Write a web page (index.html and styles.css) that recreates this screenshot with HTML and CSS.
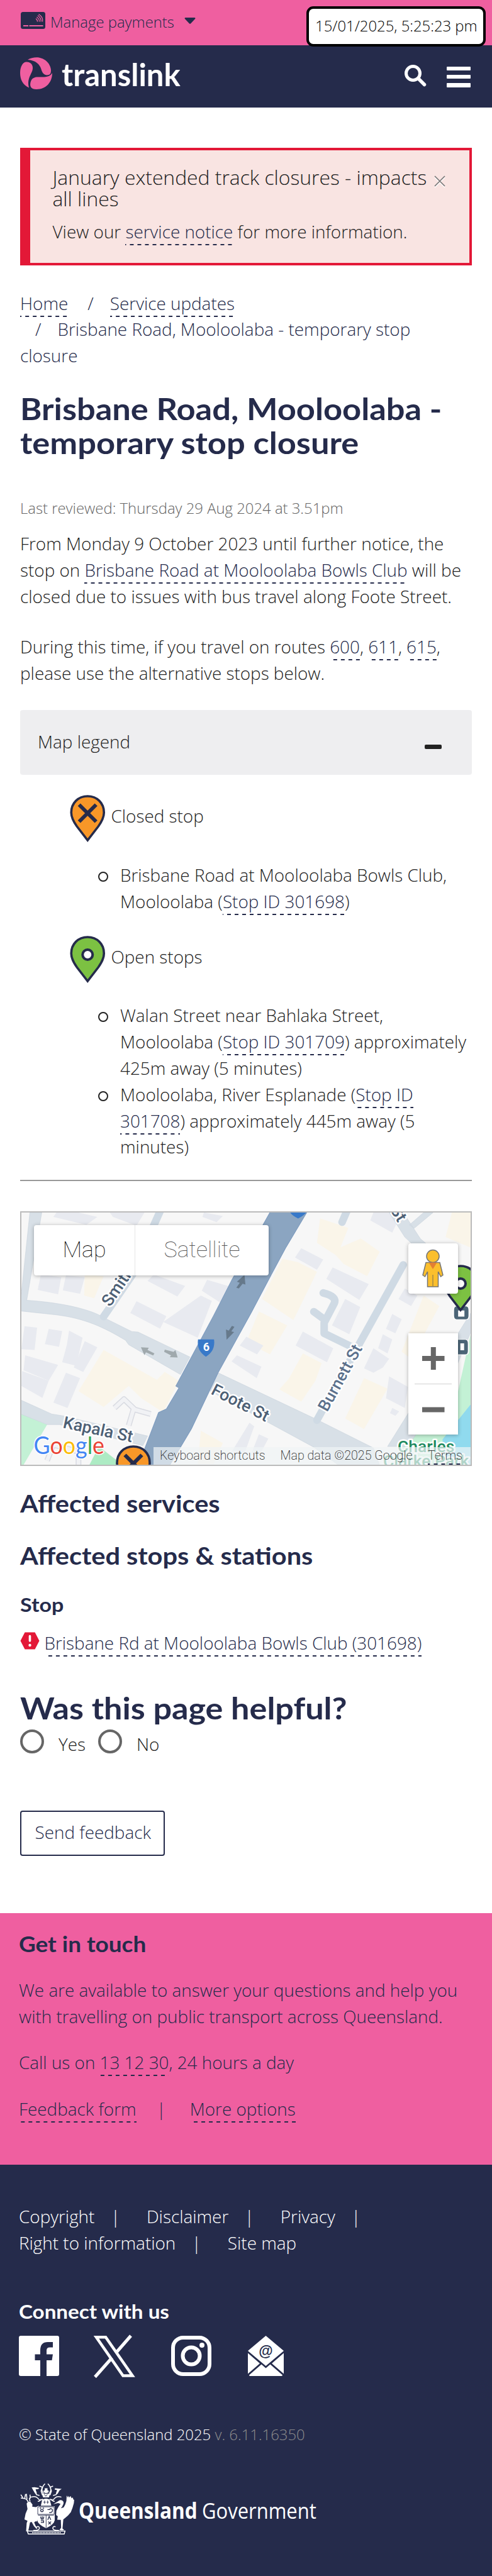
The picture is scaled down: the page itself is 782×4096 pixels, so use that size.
FILE: index.html
```
<!DOCTYPE html>
<html lang="en">
<head>
<meta charset="utf-8">
<title>Brisbane Road, Mooloolaba - temporary stop closure | Translink</title>
<link rel="stylesheet" href="styles.css">
</head>
<body>
<div class="topbar">
  <svg class="card-icon" viewBox="0 0 39 27"><rect width="39" height="27" rx="3.5" fill="#252b4b"/><path d="M4 22h8M13.500 22h22" stroke="#ef5fa0" stroke-width="2"/><g fill="none" stroke="#ef5fa0" stroke-width="1.300"><path d="M24 10.500q3 2.500 2.500 5M25.500 8q4.500 3.500 4 7.500M27 5.500q6 4.500 5 10M28.500 3.500q7.500 5 6 12"/></g></svg>
  <span class="manage">Manage payments</span>
  <svg class="caret" viewBox="0 0 18 10"><path d="M1.500 0h15q1.500.5.8 1.800L10 9.500q-1 .9-2 0L.7 1.800Q0 .5 1.500 0z" fill="#252b4b"/></svg>
</div>
<div class="clock"><span>15/01/2025, 5:25:23 pm</span></div>
<header class="masthead">
  <svg class="brand-mark" viewBox="0 0 102 102"><g fill="#ef5fa0"><path d="M24 8C45-4 72-2 88 17c14 17 12 38 3 39-12 3-20-3-24-18C62 22 50 10 24 8z"/><path d="M0 50C0 28 10 13 22 15c17 1 22 17 15 32-6 14-15 26-9 50C8 88 0 70 0 50z"/><path d="M102 50c0 30-20 52-50 52-17 0-22-9-19-22 4-16 15-18 30-17 19 1 32-1 39-13z"/></g></svg>
  <span class="brand">translink</span>
  <svg class="search" viewBox="0 0 34 34"><circle cx="13.500" cy="13.500" r="11" fill="none" stroke="#fff" stroke-width="5"/><path d="M22 22l9.500 9.500" stroke="#fff" stroke-width="5.500" stroke-linecap="round"/></svg>
  <div class="burger"><i></i><i></i><i></i></div>
</header>
<main class="content">
  <section class="alert">
    <div class="alert-title">January extended track closures - impacts<br>all lines</div>
    <div class="alert-text">View our <a>service notice</a> for more information.</div>
    <svg class="close" viewBox="0 0 18 18"><path d="M1 3l16 16M17 3L1 19" stroke="#fff" stroke-width="1.500"/><path d="M1 1l16 16M17 1L1 17" stroke="#777" stroke-width="1.700"/></svg>
  </section>
  <nav class="crumbs"><a>Home</a><span class="sep first">/</span><a>Service updates</a><br><span class="sep second">/</span>Brisbane Road, Mooloolaba - temporary stop<br>closure</nav>
  <h1><span class="wide w-title">Brisbane Road, Mooloolaba -</span><br><span class="wide w-title">temporary stop closure</span></h1>
  <div class="reviewed">Last reviewed: Thursday 29 Aug 2024 at 3.51pm</div>
  <p class="para">From Monday 9 October 2023 until further notice, the<br>stop on <a>Brisbane Road at Mooloolaba Bowls Club</a> will be<br>closed due to issues with bus travel along Foote Street.</p>
  <p class="para second-para">During this time, if you travel on routes <a>600</a>, <a>611</a>, <a>615</a>,<br>please use the alternative stops below.</p>
  <div class="panel"><span>Map legend</span><i class="minus"></i></div>
  <div class="legend-row">
    <svg class="pin" viewBox="0 0 56 74"><path d="M28 2C13 2 2 13 2 28c0 8 4 15 9 22l17 22 17-22c5-7 9-14 9-22C54 13 43 2 28 2z" fill="#f89728" stroke="#252b4b" stroke-width="3.600"/><path d="M14.500 15.500l27 27M41.500 15.500l-27 27" stroke="#252b4b" stroke-width="6"/></svg>
    <span>Closed stop</span>
  </div>
  <ul class="stops">
    <li>Brisbane Road at Mooloolaba Bowls Club,<br>Mooloolaba (<a>Stop ID 301698</a>)</li>
  </ul>
  <div class="legend-row open">
    <svg class="pin" viewBox="0 0 56 74"><path d="M28 2C13 2 2 13 2 28c0 8 4 15 9 22l17 22 17-22c5-7 9-14 9-22C54 13 43 2 28 2z" fill="#7cc142" stroke="#252b4b" stroke-width="3.600"/><circle cx="28" cy="30" r="8" fill="#fff" stroke="#252b4b" stroke-width="4"/></svg>
    <span>Open stops</span>
  </div>
  <ul class="stops open-list">
    <li>Walan Street near Bahlaka Street,<br>Mooloolaba (<a>Stop ID 301709</a>) approximately<br>425m away (5 minutes)</li>
    <li>Mooloolaba, River Esplanade (<a>Stop ID<br>301708</a>) approximately 445m away (5<br>minutes)</li>
  </ul>
  <div class="rule"></div>
  <div class="map">
    <svg class="tiles" viewBox="0 0 714 401">
      <rect width="714" height="401" fill="#f7f7f7"/>
      <g transform="scale(.4987 .2791) translate(-68 -67)">
        <g fill="#faf5e9">
          <path d="M1020 100l90 55-25 110 65-50 60 75-40 140-75-70-25-50-60-70z"/>
          <path d="M900 330l50 20 60 55-75 275-100-120z"/><path d="M825 630l90 80-55 165-75-70z"/>
          <path d="M270 420l60 10-30 125-32-15z"/><path d="M330 850l110 110 60 60 25-45 45 50-50 180-70-80-40-70-80 120-80-90z"/>
          <path d="M965 870l60 55-20 100-45 120-70-70 30-60z"/><path d="M1160 1010l75 60-75 230-60-60z"/>
          <path d="M640 1310l70 70-30 120h-50z"/><path d="M1440 67h60v200l-80-60z"/><path d="M1350 540l50 60-90 300-30-40z"/>
        </g>
        <g fill="#e8eaf0">
          <path d="M180 67h70l60 25-35 45-105-45z"/><path d="M350 67h110l-25 75-75-50z"/><path d="M650 67l60 20-20 35-45-30z"/>
          <path d="M130 420l65 15-10 98-65-25z"/><path d="M210 425l60 10-15 95-55-20z"/><path d="M490 420l100 65-25 60-95-88z"/>
          <path d="M660 450l75 40-27 97-65-75z"/><path d="M435 572l95 85-20 72-95-90z"/><path d="M640 540l35 30-45 210-110-90z"/>
          <path d="M78 715l40 8-8 127-42-5z"/><path d="M155 730l43 12-10 90-45-15z"/><path d="M220 740l43 40-20 160-45-20 15-100z"/><path d="M270 800l40 35-45 140-30-25z"/>
          <path d="M80 880l105 55-30 90-80-60z"/><path d="M70 970l85 55-20 98-67-68z"/><path d="M210 980l45 30-40 170-45-30z"/>
          <path d="M960 270l70 65-20 58-70-70z"/><path d="M1060 380l115 95-30 90-105-120z"/><path d="M1100 560l48 45-35 155-55-50z"/><path d="M965 745l97 95-20 80-100-95z"/>
          <path d="M785 775l54 50-20 50-55-50z"/><path d="M755 880l78 65-15 65-80-95z"/><path d="M1190 67h90l-30 115-70-70z"/><path d="M1190 840l50 60-20 50-30 30-30-25z"/>
          <path d="M1250 645l30 30-20 80-30-25z"/><path d="M1220 760l30 30-15 80-30-30z"/><path d="M1250 1180l22 20-12 25-17-15z"/><path d="M795 1265l15 20-30 150-40-10z"/><path d="M825 1330l30 25-30 100-25-10z"/><path d="M1240 1000l60 60-10 120-60-55z"/><path d="M1290 500l40 40-20 60-40-40z"/>
        </g>
        <path d="M68 1215l82 60-75 229h-7z" fill="#c3f1d5"/><path d="M315 1400l75 104H285z" fill="#adebc4"/>
        <path d="M1500 760v744h-260l70-170 140-170z" fill="#c3f1d5"/><path d="M1500 1160l-90 200 10 144h80z" fill="#90daee"/>
        <g fill="#d8e0e7" stroke="#c6d0da" stroke-width="1.500">
          <path d="M95 67h38L85 567C200 580 290 620 330 665l90 80 20 3 165 142-30 100-165-170-10-25C330 720 270 670 180 650L66 628V560z"/>
          <path d="M695 980l305 258 190 170 20 100h-130l-80-104-330-320z"/>
          <path d="M66 1135l99 80 35 10 270 115-15 55-265-120h-40l-84-60z"/>
          <path d="M1285 67l55 150 60 90v50l-50-50-60-100-50-140zM1380 67l-60 90-15-20 45-70z"/>
          <path d="M1500 640v110l-70 300-130 350h-65z"/>
        </g>
        <g fill="none" stroke="#cfdae4" stroke-linecap="round" stroke-linejoin="round">
          <g stroke-width="12">
            <path vector-effect="non-scaling-stroke" d="M515 40l-30 120M430 400l-100 260"/>
            <path vector-effect="non-scaling-stroke" d="M1285 365L1010 1250"/>
            <path vector-effect="non-scaling-stroke" d="M1030 525q45 20 35 60l-32 110v60l85 75M1000 632l35 45M1105 60l-15 62"/>
          </g>
        </g>
        <path d="M365 1180l30-50 35 60 50 25M425 1190l-15 90M150 1480l20-90 80 40v74" fill="none" stroke="#d9dbe2" stroke-width="9" vector-effect="non-scaling-stroke" stroke-linejoin="round"/>
        <path d="M365 1180l30-50 35 60 50 25M425 1190l-15 90M150 1480l20-90 80 40v74" fill="none" stroke="#f1f2f5" stroke-width="6" vector-effect="non-scaling-stroke" stroke-linejoin="round"/>
        <path d="M862 60h118l-70 210-45 150-65 220-105 340-85 320-70 210H440l65-304 25-20 40-120-10-10 120-400 60-210 95-300z" fill="#8ba5c1" stroke="#6a8db8" stroke-width="2"/>
        <g fill="#66798b"><path d="M779 422l3 55-9-4-12 27-8-5 11-28-9-6z"/><path d="M722 792l24-44-9-4 10-26-8-5-10 27-9-7z"/></g>
        <g fill="#a0a9ad"><path d="M449 835l25 2-4 13 22 20-4 11-23-18-5 16z"/><path d="M566 893l-7-42-6 10-28-13-2 13 22 20-4 10z"/></g>
        <path d="M631 790h51q5 65-26 98-30-33-25-98z" fill="#3879c9"/><path d="M925 67h51q-10 20-26 34-18-15-25-34z" fill="#3879c9"/>
        <path d="M1455 600h30q10 0 10 25v30q0 22-10 22h-30q-10 0-10-22v-30q0-25 10-25zM1440 790h43q10 0 10 25v40q0 22-10 22h-43z" fill="#4b6577" stroke="#fff" stroke-width="4"/>
        <path d="M1460 625h20v35h-20zM1467 812h12v40h-12z" fill="#fff"/>
      </g>
      <text x="294" y="220" class="shield" text-anchor="middle">6</text>
      <g class="roads">
        <text transform="translate(141 151) rotate(-56)">Smith</text>
        <text transform="translate(300 288) rotate(27)">Foote St</text>
        <text transform="translate(486 318) rotate(-61)" class="soft">Burnett St</text>
        <text transform="translate(65 342) rotate(12)">Kapala St</text>
        <text transform="translate(577 -18) rotate(58)">r St</text>
        <text x="598" y="381" class="park">Charles</text>
        <text x="575" y="404" class="park">Clarke Park</text>
      </g>
      <g transform="translate(150 370)"><path d="M28 2C13 2 2 13 2 28c0 8 4 15 9 22l17 22 17-22c5-7 9-14 9-22C54 13 43 2 28 2z" fill="#f89728" stroke="#252b4b" stroke-width="3.600"/><path d="M14.500 15.500l27 27M41.500 15.500l-27 27" stroke="#252b4b" stroke-width="6"/></g>
      <g transform="translate(670 83)"><path d="M28 2C13 2 2 13 2 28c0 8 4 15 9 22l17 22 17-22c5-7 9-14 9-22C54 13 43 2 28 2z" fill="#7cc142" stroke="#252b4b" stroke-width="3.600"/><circle cx="28" cy="30" r="8" fill="#fff" stroke="#252b4b" stroke-width="4"/></g>
      <text transform="translate(19.500 384) scale(.94 1)" class="google"><tspan fill="#4285f4">G</tspan><tspan fill="#ea4335">o</tspan><tspan fill="#fbbc05">o</tspan><tspan fill="#4285f4">g</tspan><tspan fill="#34a853">l</tspan><tspan fill="#ea4335">e</tspan></text>
    </svg>
    <div class="map-type"><span class="active">Map</span><span>Satellite</span></div>
    <div class="pegman"><svg viewBox="0 0 34 60"><g fill="#fbbf2d" stroke="#757575" stroke-width="1.500"><path d="M6 20.500h22l5 20-3.500 2.500-4-8V59h-17V35l-4 8L1 40.500z"/><circle cx="17" cy="10.500" r="10"/></g><path d="M17 40v19" stroke="#a58a45" stroke-width="1.500"/><path d="M10.500 20.500h13L17 31z" fill="#e37f32"/></svg></div>
    <div class="zoomer"><svg viewBox="0 0 79 161"><path d="M22 40h35.500M39.800 22v36M22 121.500h35.500" stroke="#666" stroke-width="8"/><path d="M10 80.500h59" stroke="#e6e6e6" stroke-width="2"/></svg></div>
    <div class="attribution"><span class="keys">Keyboard shortcuts</span><span class="data">Map data ©2025 Google</span><a class="terms">Terms</a></div>
  </div>
  <h2 class="services"><span class="wide w-services">Affected services</span></h2>
  <h2 class="stations"><span class="wide w-services">Affected stops &amp; stations</span></h2>
  <h3><span class="wide w-stop">Stop</span></h3>
  <div class="affected"><svg viewBox="0 0 31 28"><path d="M7.500.5h16L30.500 14l-7 13.500h-16L.5 14z" fill="#e31837"/><path d="M15.500 6.500v7.500" stroke="#fff" stroke-width="3.600" stroke-linecap="round"/><circle cx="15.500" cy="21" r="2.200" fill="#fff"/></svg><a>Brisbane Rd at Mooloolaba Bowls Club (301698)</a></div>
  <h2 class="helpful"><span class="wide w-helpful">Was this page helpful?</span></h2>
  <div class="radios"><i></i><span class="yes">Yes</span><i></i><span>No</span></div>
  <div class="send"><span>Send feedback</span></div>
</main>
<section class="touch">
  <h2><span class="wide w-foot">Get in touch</span></h2>
  <p>We are available to answer your questions and help you<br>with travelling on public transport across Queensland.</p>
  <p class="call">Call us on <a>13 12 30</a>, 24 hours a day</p>
  <p class="links"><a>Feedback form</a><span class="bar">|</span><a>More options</a></p>
</section>
<footer class="footer">
  <div class="foot-links">Copyright<span class="bar">|</span>Disclaimer<span class="bar">|</span>Privacy<span class="bar">|</span><br>Right to information<span class="bar">|</span>Site map</div>
  <h2><span class="wide w-foot">Connect with us</span></h2>
  <div class="social">
    <svg class="fb" viewBox="0 0 64 64"><path fill="#fff" fill-rule="evenodd" d="M3 0h58q3 0 3 3v58q0 3-3 3H44V39h8.500l1.500-9.500H44v-6q0-5 5-5h5V10h-8q-12 0-12 13v6.500h-8.500V39H34v25H3q-3 0-3-3V3q0-3 3-3z"/></svg>
    <svg class="xx" viewBox="0 0 66 66"><path fill="none" stroke="#fff" stroke-width="4.500" d="M4 2.300h15L61.500 63.500H46.500z"/><path stroke="#fff" stroke-width="5" d="M59 0L35 27.500M29 35L2 65.500"/></svg>
    <svg class="ig" viewBox="0 0 64 64"><rect x="3" y="3" width="58" height="58" rx="16" fill="none" stroke="#fff" stroke-width="6"/><circle cx="32" cy="32" r="13.500" fill="none" stroke="#fff" stroke-width="6"/><circle cx="49" cy="15" r="4" fill="#fff"/></svg>
    <svg class="mail" viewBox="0 0 57 64"><path fill="#fff" d="M28.500 0L57 24 28.500 48 0 24zM0 27.500l19 16.500L0 60.500zM57 27.500L38 44l19 16.500zM21.500 45.500l7 6 7-6L55 62.500q-.5 1.500-1.500 1.500h-50Q2 64 2 62.500z"/><text x="28.500" y="32" text-anchor="middle" class="at">@</text></svg>
  </div>
  <div class="legal">© State of Queensland 2025 <span>v. 6.11.16350</span></div>
  <div class="gov">
    <svg class="crest" viewBox="28 28 392 367">
      <g fill="#fff">
        <path d="M74 172l10-14 18 2 14 20-2 14 26 4 22-10v30l-8 20 2 40-10 24-8-2-10 8 10 24 14 18-8 4-18-20-16-30-12 4-8 40-4 18 8 6H70l4-60 6-16-22-10 8-40 14-34-4-24z"/>
        <path d="M300 156q14-14 30-6 14 8 8 26-8 20-18 30l20-6q12-16 20-46l2-40 10 16 2-14 8 12 8-10 8 16 8-6 4 14 6 4-2 22-10 36-12 30-20 24-24 20-10 8-6 66 12 10-16 4-18-4 12-16-2-56-26-2 4-24-12-10 2-30 16-30 14-20-18-6-34 8z"/>
        <path d="M150 192h126v100q-4 30-62 58-60-28-64-58z"/>
        <path d="M186 144q28-14 54 0l12 44h-76z"/>
        <path d="M204 62h20v34h-20zM196 78h36v14h-36z"/>
        <path d="M184 100h58l-8 28h-42z"/>
        <path d="M110 56l20-2 34 6-6 8-20 2 10 30-12 2-16-28zM326 66l-48-4-2 10 18 2-8 26 10 4 14-26z"/>
      </g>
      <g fill="none" stroke="#fff" stroke-width="7">
        <path d="M206 30q-18 14-22 46l10 24M226 30q18 14 22 46l-10 24M166 46l20 8-8 28 10 30M264 46l-20 8 8 28-10 30"/>
        <path d="M132 70l12 38 22 6M298 70l-12 38-22 6M106 126q30-10 44 4l20 20 20-10M324 126q-30-10-44 4l-20 20-20-10M154 156q16 2 22-16M276 156q-16 2-22-16"/>
        <path d="M84 160q-8-20-26-24l-26-4M46 130l-14-22M60 134l6-30M98 158l-4-22 12-14M76 140l-4-38M100 136l-2-28"/>
        <path d="M78 370h272l-6 22H86zM122 366q44 0 44-18-4-16-20-8M306 366q-44 0-44-18 4-16 20-8"/>
      </g>
      <g fill="none" stroke="#252b4b" stroke-width="6">
        <path d="M154 196h118v54H154zM214 256v92M156 256h114" stroke-width="4"/>
        <path d="M203 150v24M225 150v24M195 162h16M217 162h16M200 104l12 16 12-16" stroke-width="4"/>
        <circle cx="184" cy="222" r="9"/><path d="M170 210l6-8M198 210l-6-8M224 214q20 6 20-8M236 238q32-2 22-24-14-12-20 4M174 266l6 22M186 264v24M198 266l-6 22M176 296h20v12h-20"/>
        <path d="M230 302l18 20M250 302l-20 20"/><path d="M226 290l10-26 12 26" />
      </g>
      <path d="M114 381h204" stroke="#fff" stroke-width="9" stroke-dasharray="6 5"/>
    </svg>
    <span class="wide q">Queensland</span><span class="wide g">Government</span>
  </div>
</footer>
</body>
</html>
```
FILE: styles.css
```
* { box-sizing: border-box; }
body { margin: 0; width: 782px; background: #fff; color: #222; font: 300 27.86px/41.8px "Open Sans", "Noto Sans", sans-serif; position: relative; overflow-x: hidden; white-space: nowrap; }
p, h1, h2, h3, ul { margin: 0; padding: 0; }
h1, h2, h3, .brand { font-family: Lato, "Open Sans", sans-serif; font-weight: 700; color: #252b4b; }
svg { display: block; flex: none; overflow: visible; }
a { color: #252b4b; padding-bottom: 3px; background: linear-gradient(90deg, #252b4b 50%, transparent 50%) center bottom / 12px 2px repeat-x; }
.wide { display: inline-block; transform-origin: 0 50%; }
h1 .wide, h2 .wide, h3 .wide { vertical-align: top; }
.w-title { transform: scaleX(1.092); }
.w-services { transform: scaleX(1.079); }
.w-stop { transform: scaleX(1.11); }
.w-helpful { transform: scaleX(1.11); }
.w-foot { transform: scaleX(1.07); }

.topbar { height: 71.6px; background: #ef5fa0; padding: 19px 0 0 33px; display: flex; align-items: flex-start; }
.card-icon { width: 39px; height: 27px; }
.manage { margin: -2.500px 0 0 8px; color: #252b4b; font-size: 23.880px; line-height: 36px; width: 212.500px; }
.caret { width: 18px; height: 10px; margin-top: 9px; }
.clock { position: absolute; left: 486.500px; top: 10px; width: 285.500px; height: 64px; border: 4px solid #000; border-radius: 11px; background: #fff; color: #000; font-size: 23.880px; line-height: 54.500px; padding-left: 10.500px; }
.masthead { height: 99.400px; background: #252b4b; display: flex; padding: 19px 0 0 32px; align-items: flex-start; }
.brand-mark { width: 51px; height: 51px; }
.brand { color: #fff; font-size: 49px; line-height: 54px; margin-left: 15px; width: 545px; }
.search { width: 34px; height: 34px; margin-top: 12px; }
.burger { margin: 15px 0 0 32.500px; width: 38px; display: grid; gap: 6.800px; }
.burger i { height: 6.500px; background: #fff; border-radius: 1px; }

.content { padding: 63.700px 32px 91.500px; }
.alert { position: relative; height: 187px; border: 4px solid #e31837; border-left-width: 16px; background: #f9e4e2; padding: 26px 0 0 35.500px; }
.alert-title { font-size: 31.840px; line-height: 34.100px; }
.alert-text { margin-top: 15.500px; }
.close { position: absolute; right: 38px; top: 40px; width: 18px; height: 18px; }
.crumbs { margin-top: 40px; color: #252b4b; }
.sep.first { margin: 0 26px 0 31px; }
.sep.second { margin: 0 26px 0 24px; }
h1 { margin-top: 35.600px; font-size: 48px; line-height: 54.100px; }
.reviewed { margin-top: 59.300px; font-size: 23.880px; line-height: 35.800px; color: #666; }
.para { margin-top: 18.100px; }
.second-para { margin-top: 38.500px; }
.panel { margin-top: 37px; height: 103.600px; border-radius: 4px; background: #eeeef0; display: flex; justify-content: space-between; padding: 30px 48px 0 28px; }
.minus { width: 27.500px; height: 7px; border-radius: 2px; background: #222; margin-top: 25px; }
.legend-row { margin: 31.700px 0 0 79px; display: flex; height: 73.800px; }
.legend-row.open { margin-top: 33.400px; }
.legend-row span { padding: 13.400px 0 0 9px; }
.legend-row.open span { padding-top: 12.500px; }
.pin { width: 56.500px; height: 74px; }
.stops { margin: 33.700px 0 0 159px; list-style: none; }
.open-list { margin-top: 32.300px; }
.stops li { position: relative; }
.stops li::before { content: ""; position: absolute; left: -35.500px; top: 15px; width: 12px; height: 12px; border: 2.500px solid #222; border-radius: 50%; }
.rule { margin-top: 31.200px; height: 2px; background: #999; }

.map { position: relative; margin-top: 47.700px; height: 405px; border: 2px solid #bbb; overflow: hidden; }
.tiles { width: 714px; height: 401px; overflow: hidden; font-family: Roboto, sans-serif; }
.roads text { font-size: 26.500px; font-weight: 500; fill: #4d6075; stroke: #fff; stroke-width: 5px; paint-order: stroke; stroke-linejoin: round; }
.roads .soft { fill: #5c718c; font-size: 26px; }
.roads .park { fill: #1d8a60; }
.shield { font-size: 18px; font-weight: 700; fill: #fff; }
.tiles .google { font: 400 38px Lato, sans-serif; stroke: #fff; stroke-width: 3px; paint-order: stroke; }
.map-type { position: absolute; left: 20px; top: 20px; width: 373px; height: 79.600px; display: flex; background: #fff; border-radius: 4px; box-shadow: 0 1px 6px rgba(0,0,0,.3); font: 100 35.800px/79px Roboto, sans-serif; color: #565656; text-align: center; }
.map-type span { width: 212px; }
.map-type .active { width: 161px; color: #000; border-right: 1px solid #e6e6e6; }
.pegman { position: absolute; right: 20px; top: 49px; width: 79px; height: 79.600px; background: #fff; border-radius: 4px; box-shadow: 0 1px 6px rgba(0,0,0,.3); padding: 10px 0 0 22px; }
.pegman svg { width: 34px; height: 60px; }
.zoomer { position: absolute; right: 20px; top: 192px; width: 79px; height: 161px; background: #fff; box-shadow: 0 1px 6px rgba(0,0,0,.3); }
.attribution { position: absolute; right: 0; bottom: 0; width: 504.500px; height: 28px; background: rgba(240,243,245,.7); display: flex; font: 200 19.700px/28px Roboto, sans-serif; color: #222; padding-left: 10.500px; }
.keys { width: 191.500px; }
.data { width: 234.500px; }
.attribution .terms { color: #222; padding: 0; height: 28px; }

.services { margin-top: 35.500px; font-size: 38.500px; line-height: 46px; }
.stations { margin-top: 37.600px; font-size: 38.500px; line-height: 46px; }
h3 { margin-top: 35.900px; font-size: 30.600px; line-height: 40px; }
.affected { margin-top: 19.800px; display: flex; height: 41.800px; }
.affected svg { width: 31px; height: 28px; margin: 3.500px 7.500px 0 0; }
.affected a { height: 42.500px; }
.helpful { margin-top: 55.600px; font-size: 47px; line-height: 54px; }
.radios { margin-top: 6.400px; display: flex; height: 44px; line-height: 46px; }
.radios i { width: 38px; height: 38px; border: 4px solid #666; border-radius: 50%; margin-right: 23px; }
.radios .yes { width: 63px; }
.send { margin-top: 85.200px; width: 230px; height: 71.800px; border: 2px solid #252b4b; border-radius: 4px; color: #252b4b; padding: 12.500px 0 0 21.500px; }

.touch { height: 399.700px; background: #ef5fa0; color: #252b4b; padding: 27.600px 30px 0; }
.touch h2 { font-size: 34.500px; line-height: 42px; margin-bottom: 32.700px; }
.touch .call { margin-top: 31.400px; }
.touch .links { margin-top: 31.600px; }
.links .bar { margin: 0 38px 0 32px; }
.footer { height: 654px; background: #252b4b; color: #fff; padding: 62.200px 30px 0; }
.foot-links .bar { margin: 0 42px 0 25.500px; }
.footer h2 { color: #fff; margin-top: 67.300px; font-size: 31px; line-height: 40px; }
.social { margin-top: 18.900px; height: 65.300px; display: flex; }
.fb { width: 64px; height: 64px; margin-right: 54.500px; }
.xx { width: 66px; height: 66px; margin-right: 57px; }
.ig { width: 64px; height: 64px; margin-right: 58.500px; }
.mail { width: 57px; height: 64px; }
.at { font: 700 23px "Liberation Sans", sans-serif; fill: #252b4b; }
.legal { margin-top: 73.700px; font-size: 23.880px; line-height: 35.800px; }
.legal span { color: #8c8c8c; }
.gov { margin: 60px 0 0 2px; display: flex; font-size: 35px; line-height: 48px; }
.crest { width: 87px; height: 81px; }
.q { font-weight: 700; margin: 19px 0 0 6px; width: 196px; transform: scaleX(.9); }
.g { font-weight: 400; margin-top: 19px; transform: scaleX(.885); }
```
